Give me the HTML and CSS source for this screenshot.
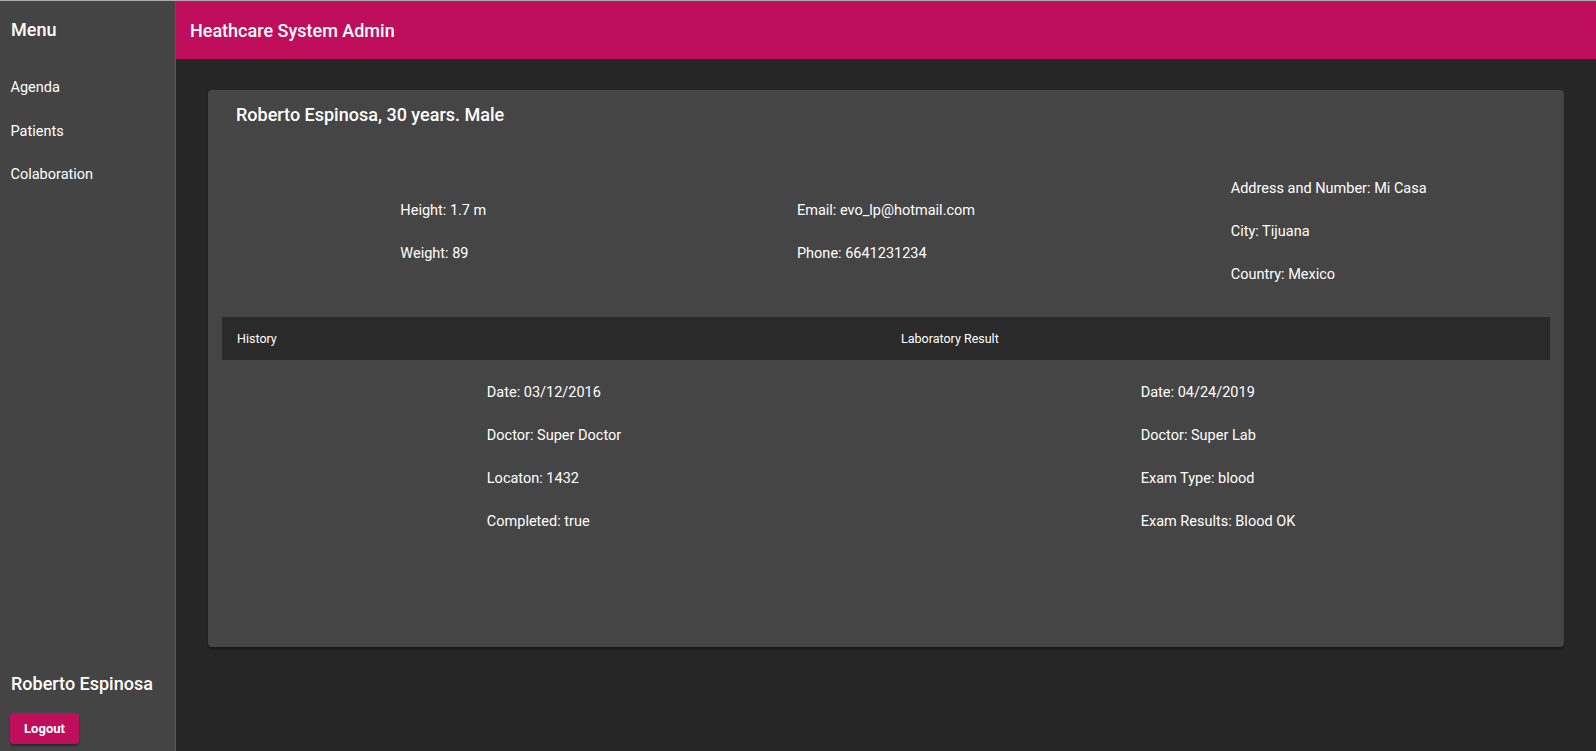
FILE: index.html
```html
<!DOCTYPE html>
<html>
<head>
<meta charset="utf-8">
<link rel="stylesheet" href="styles.css">
</head>
<body>
<div class="app">
  <aside class="sidebar">
    <div class="menu-title">Menu</div>
    <nav class="nav">
      <div class="nav-item">Agenda</div>
      <div class="nav-item">Patients</div>
      <div class="nav-item">Colaboration</div>
    </nav>
    <div class="user">
      <div class="user-name">Roberto Espinosa</div>
      <button class="logout">Logout</button>
    </div>
  </aside>
  <main class="main">
    <header class="topbar">Heathcare System Admin</header>
    <section class="content">
      <div class="card">
        <div class="card-title">Roberto Espinosa, 30 years. Male</div>
        <div class="info-row">
          <div class="col"><div class="list">
            <div class="item">Height: 1.7 m</div>
            <div class="item">Weight: 89</div>
          </div></div>
          <div class="col"><div class="list">
            <div class="item">Email: evo_lp@hotmail.com</div>
            <div class="item">Phone: 6641231234</div>
          </div></div>
          <div class="col"><div class="list">
            <div class="item">Address and Number: Mi Casa</div>
            <div class="item">City: Tijuana</div>
            <div class="item">Country: Mexico</div>
          </div></div>
        </div>
        <div class="tab-head">
          <div class="tab-cell">History</div>
          <div class="tab-cell">Laboratory Result</div>
        </div>
        <div class="tab-body">
          <div class="col"><div class="list">
            <div class="item">Date: 03/12/2016</div>
            <div class="item">Doctor: Super Doctor</div>
            <div class="item">Locaton: 1432</div>
            <div class="item">Completed: true</div>
          </div></div>
          <div class="col"><div class="list">
            <div class="item">Date: 04/24/2019</div>
            <div class="item">Doctor: Super Lab</div>
            <div class="item">Exam Type: blood</div>
            <div class="item">Exam Results: Blood OK</div>
          </div></div>
        </div>
      </div>
    </section>
  </main>
</div>
</body>
</html>
```
FILE: styles.css
```css
* { box-sizing: border-box; }
html, body { margin: 0; padding: 0; }
body {
  font-family: Roboto, "Liberation Sans", Arial, sans-serif;
  color: #fff;
  background: #262626;
  border-top: 1px solid #ababab;
  height: 100vh;
  overflow: hidden;
}
.app {
  display: flex;
  height: calc(100vh - 1px);
}
.sidebar {
  width: 176px;
  flex: 0 0 176px;
  background: #444444;
  border-right: 1px solid #5a5a5a;
  display: flex;
  flex-direction: column;
  padding: 0 0 7px 10px;
}
.menu-title {
  font-size: 18px;
  font-weight: 500;
  line-height: 24px;
  margin-top: 17px;
  padding-left: 1px;
}
.nav {
  display: flex;
  flex-direction: column;
  margin-top: 36px;
  gap: 23.5px;
}
.nav-item {
  font-size: 14.5px;
  line-height: 20px;
  padding-left: 0.5px;
}
.user { margin-top: auto; }
.user-name {
  font-size: 18px;
  font-weight: 500;
  line-height: 24px;
  padding-left: 1px;
  margin-bottom: 17px;
}
.logout {
  background: #be0e5c;
  color: #fff;
  border: none;
  border-radius: 4px;
  font-family: inherit;
  font-size: 13px;
  font-weight: 700;
  width: 69px;
  height: 31px;
  padding: 0;
  box-shadow: 0 2px 2px rgba(0,0,0,0.35);
}
.main {
  flex: 1;
  display: flex;
  flex-direction: column;
  min-width: 0;
}
.topbar {
  height: 58px;
  background: #be0e5c;
  display: flex;
  align-items: center;
  padding-left: 14px;
  font-size: 18px;
  font-weight: 500;
}
.content {
  padding: 31px 32px 0 32px;
}
.card {
  background: #454545;
  border-radius: 4px;
  box-shadow: 0 2px 2px rgba(0,0,0,0.4);
  padding: 13px 14px 0 14px;
  height: 557px;
}
.card-title {
  font-size: 18px;
  font-weight: 500;
  line-height: 24px;
  padding-left: 14px;
}
.info-row {
  display: flex;
  align-items: center;
  margin-top: 52px;
}
.col {
  flex: 1;
  display: flex;
  justify-content: center;
}
.list {
  display: flex;
  flex-direction: column;
  gap: 23px;
}
.item {
  font-size: 14.5px;
  line-height: 20px;
  white-space: nowrap;
}
.tab-head {
  display: flex;
  background: #2a2a2a;
  height: 43px;
  margin-top: 32px;
  align-items: center;
}
.tab-cell {
  flex: 1;
  padding-left: 15px;
  font-size: 12.5px;
}
.tab-body {
  display: flex;
  margin-top: 23px;
}
```
